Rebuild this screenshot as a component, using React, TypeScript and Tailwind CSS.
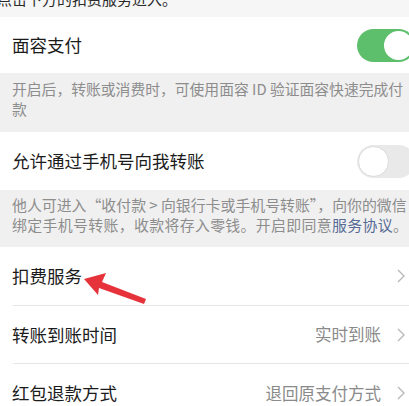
import React from "react";

const font = { fontFamily: '"Noto Sans CJK SC", "Noto Sans", sans-serif' };

function Chevron() {
  return (
    <svg width="8" height="14" viewBox="0 0 8 14" className="shrink-0">
      <path d="M1 1 L7 7 L1 13" fill="none" stroke="#b9b9b9" strokeWidth="1.4" />
    </svg>
  );
}

function Toggle({ on }: { on: boolean }) {
  return on ? (
    <div className="relative h-[33px] w-[58px] -mr-[6px] shrink-0 rounded-full bg-[#5dbf6c]">
      <div className="absolute right-[2px] top-[2px] h-[29px] w-[29px] rounded-full bg-white" />
    </div>
  ) : (
    <div className="relative h-[33px] w-[58px] -mr-[6px] shrink-0 rounded-full bg-[#e9e9e9]">
      <div className="absolute left-[1px] top-[1px] h-[31px] w-[31px] rounded-full bg-white border border-[#dcdcdc]" />
    </div>
  );
}

function LinkRow({ title, value, divider }: { title: string; value?: string; divider?: boolean }) {
  return (
    <div className="relative flex h-[58.5px] items-center pl-[12px] pr-[4px] bg-white">
      <span className="flex-1 text-[17.5px] text-[#1b1b1b]">{title}</span>
      {value && <span className="mr-[16px] text-[16.5px] text-[#8a8a8a]">{value}</span>}
      <Chevron />
      {divider && <div className="absolute bottom-0 left-[13px] right-0 h-px bg-[#e6e6e6]" />}
    </div>
  );
}

export default function App() {
  return (
    <div className="relative h-[406px] w-[409px] overflow-hidden bg-[#f3f3f3]" style={font}>
      <div className="h-[17px] overflow-hidden bg-[#f6f6f6]">
        <div className="-mt-[12px] -ml-[3px] whitespace-nowrap text-[15px] leading-[22px] text-[#2a2a2a]">
          点击下方的扣费服务进入。
        </div>
      </div>

      <div className="flex h-[56px] items-center bg-white pl-[12px]">
        <span className="flex-1 text-[17.5px] text-[#1b1b1b]">面容支付</span>
        <Toggle on />
      </div>

      <div className="h-[59px] bg-[#f0f0f0] pl-[12px] pt-[6px] text-[14.8px] leading-[20px] text-[#8d8d8d]">
        <div className="whitespace-nowrap">开启后，转账或消费时，可使用面容 ID 验证面容快速完成付</div>
        <div>款</div>
      </div>

      <div className="flex h-[58px] items-center bg-white pl-[12px]">
        <span className="flex-1 text-[17.5px] text-[#1b1b1b]">允许通过手机号向我转账</span>
        <Toggle on={false} />
      </div>

      <div className="h-[57px] bg-[#f0f0f0] pl-[12px] pt-[5px] text-[14.9px] leading-[20px] text-[#8d8d8d]">
        <div className="whitespace-nowrap">他人可进入“收付款 &gt; 向银行卡或手机号转账”，向你的微信</div>
        <div className="whitespace-nowrap tracking-[0.35px]">
          绑定手机号转账，收款将存入零钱。开启即同意<span className="text-[#576b95]">服务协议</span>。
        </div>
      </div>

      <LinkRow title="扣费服务" divider />
      <LinkRow title="转账到账时间" value="实时到账" divider />
      <LinkRow title="红包退款方式" value="退回原支付方式" />

      <svg className="pointer-events-none absolute left-0 top-0" width="409" height="406" viewBox="0 0 409 406">
        <path
          d="M84 279 L106 273 L102 282 L146 299 L144 304 L99 288 L98 295 Z"
          fill="#e6333b"
        />
      </svg>
    </div>
  );
}
